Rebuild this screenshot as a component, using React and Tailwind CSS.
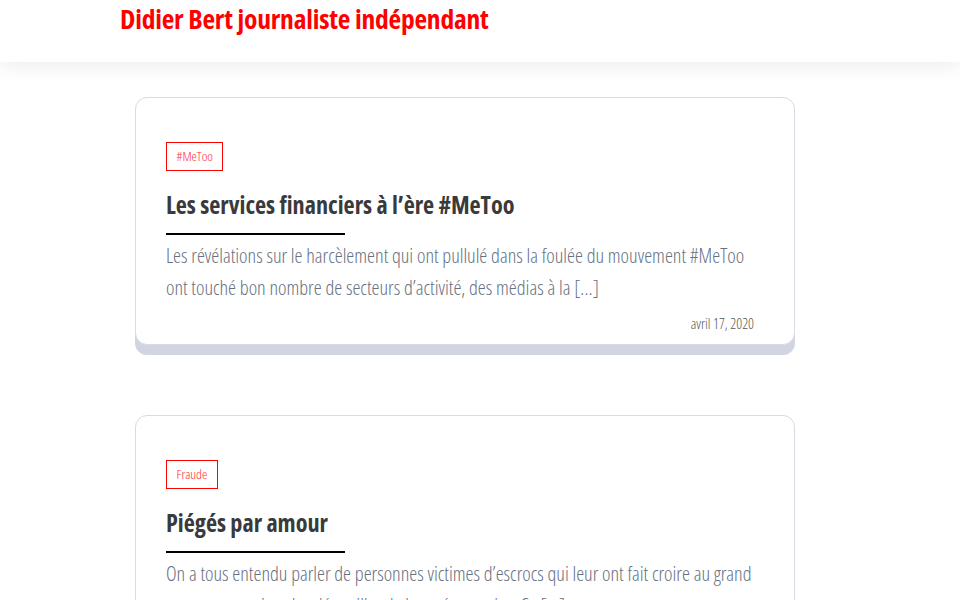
export default function App() {
  const font = { fontFamily: '"Open Sans", "Liberation Sans", sans-serif', fontStretch: '75%' };
  const posts = [
    {
      tag: '#MeToo',
      title: 'Les services financiers à l’ère #MeToo',
      text: 'Les révélations sur le harcèlement qui ont pullulé dans la foulée du mouvement #MeToo ont touché bon nombre de secteurs d’activité, des médias à la […]',
      date: 'avril 17, 2020',
    },
    {
      tag: 'Fraude',
      title: 'Piégés par amour',
      text: 'On a tous entendu parler de personnes victimes d’escrocs qui leur ont fait croire au grand amour pour mieux les dépouiller de leurs économies. Ce […]',
      date: 'avril 10, 2020',
    },
  ];
  return (
    <div className="min-h-[600px] bg-white" style={font}>
      <header className="h-[62px] bg-white shadow-[0_4px_20px_rgba(0,0,0,0.08)] relative z-10">
        <div className="pl-[120px] pt-[1px]">
          <h1 className="text-[27.5px] leading-[36px] font-bold text-[#ff0000] tracking-[-0.2px]">Didier Bert journaliste indépendant</h1>
        </div>
      </header>
      <main className="flex flex-col items-start pt-[35px] pl-[135px] gap-[70px]">
        {posts.map((p) => (
          <article key={p.tag} className="w-[660px] bg-white border border-[#d9dae3] rounded-[12px] shadow-[0_10px_0_#d1d4e1] pt-[44px] pb-[11px] px-[30px]">
            <span className="inline-block border border-[#ff0000] text-[#ff2a2a] text-[13.5px] leading-[27px] px-[9.5px] font-light">{p.tag}</span>
            <h2 className="mt-[16px] text-[24.2px] leading-[36px] font-bold text-[#3a3a3a] pb-[10px]">{p.title}</h2>
            <div className="w-[179px] h-[2px] bg-black"></div>
            <p className="mt-[4px] text-[20.15px] leading-[32px] font-light text-[#66707f]">{p.text}</p>
            <div className="text-right pr-[10px] mt-[12px] text-[14.5px] leading-[18px] font-light text-[#555]">{p.date}</div>
          </article>
        ))}
      </main>
    </div>
  );
}
